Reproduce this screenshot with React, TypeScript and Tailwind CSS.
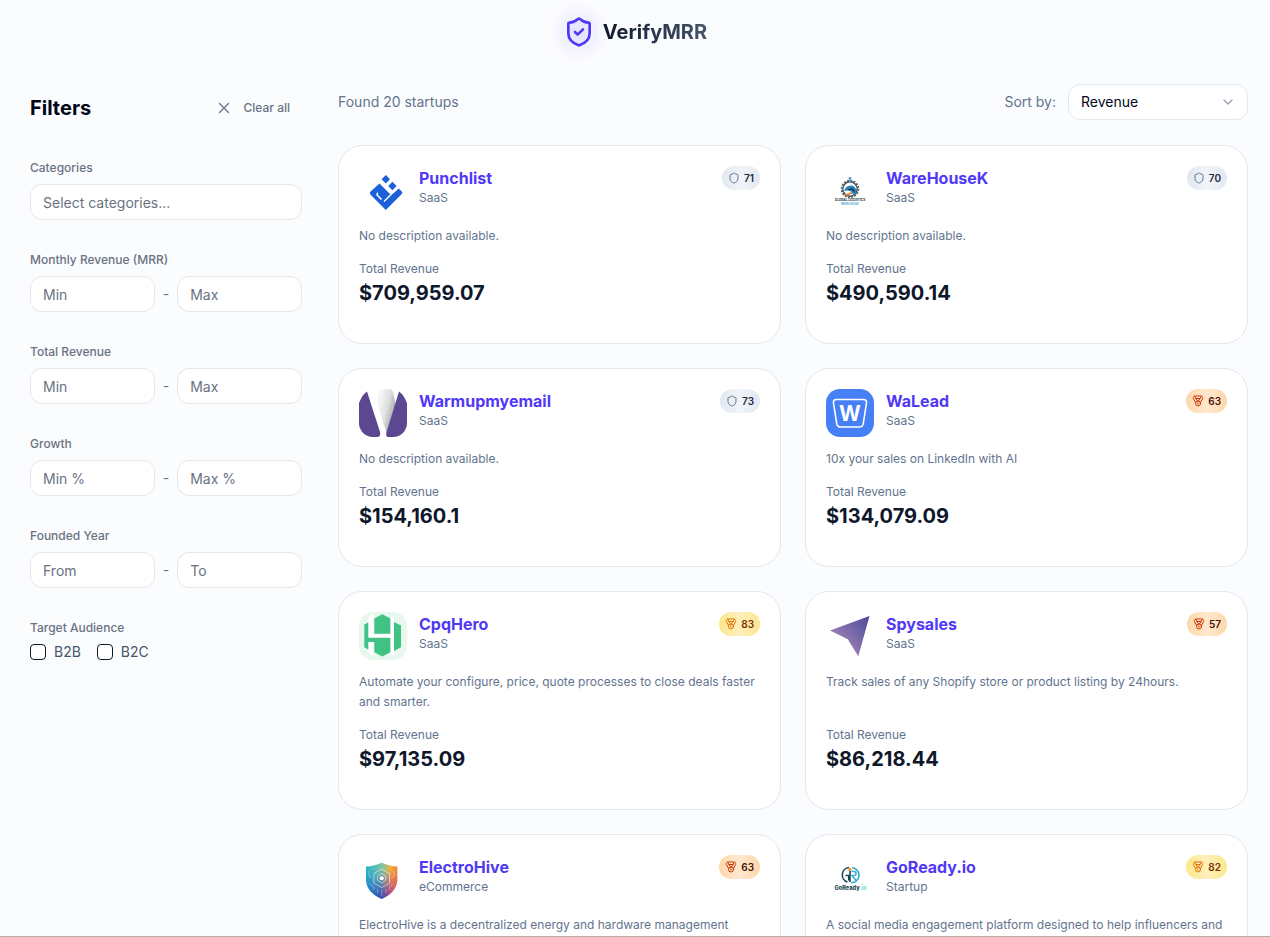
import React from "react";
import { ChevronDown, Medal, Shield, ShieldCheck, X } from "lucide-react";

type Tier = "silver" | "gold" | "bronze";

interface Startup {
  name: string;
  category: string;
  description: string;
  revenue: string;
  score: number;
  tier: Tier;
  logo: React.ReactNode;
}

function PunchlistLogo() {
  return (
    <svg viewBox="0 0 48 48" className="size-12" aria-hidden="true">
      <g fill="#1b5fd9">
        <path d="M26.8 9 31 13.2l-4.2 4.2-4.2-4.2z" />
        <path d="M33.4 15.8 37.6 20l-4.2 4.2-4.2-4.2z" />
        <path d="M20.500 17.500 31 28 35.500 26.500 39.600 22.400 42.800 25.600q1.200 1.200 0 2.400L26.800 44 11.600 28.800q-1.600-1.600 0-3.200z" />
      </g>
      <path d="m22.500 33.500-3.700-3.700q-1.500-1.500 0-3M34.500 26 25 35.500" fill="none" stroke="#fff" strokeWidth="1.500" />
    </svg>
  );
}

function WarehouseLogo() {
  return (
    <svg viewBox="0 0 48 48" className="size-12" aria-hidden="true">
      <circle cx="24" cy="23" r="8.4" fill="none" stroke="#5b6870" strokeWidth="1.8" strokeDasharray="2 1.3" />
      <circle cx="24" cy="23" r="7.2" fill="none" stroke="#44525c" strokeWidth="1.4" />
      <path d="M24 11v5M22.6 12.2h2.8" stroke="#4e9cc7" strokeWidth="1.6" />
      <path d="M18.5 25a6 6 0 0 1 11.6-1.5v4.2h-4.4q0-4.2-7.2-2.7z" fill="#2183b8" />
      <path d="M22.6 24q4-2.6 5.6 1.4" stroke="#12364d" strokeWidth="1.6" fill="none" />
      <path d="m17 29.4 8.2-3.4 1 1.6-4 1.8z" fill="#ee8038" />
      <text x="24" y="35.4" textAnchor="middle" fontSize="3.2" fontWeight="700" fill="#28343c" fontFamily="Inter, sans-serif">GLOBAL LOGISTICS</text>
      <text x="24" y="38.6" textAnchor="middle" fontSize="2.8" fontWeight="600" fill="#3597c8" fontFamily="Inter, sans-serif">WAREHOUSE</text>
    </svg>
  );
}

function WarmupLogo() {
  return (
    <svg viewBox="0 0 48 48" className="size-12 rounded-[14px]" aria-hidden="true">
      <defs>
        <linearGradient id="warmup-fold" x1="0.2" y1="0.2" x2="0.9" y2="0.6">
          <stop offset="0" stopColor="#f5f5f5" />
          <stop offset="0.5" stopColor="#dfdfe1" />
          <stop offset="1" stopColor="#a9abad" />
        </linearGradient>
      </defs>
      <path d="M20 3q1-3 4-3h6q3 0 4 3l2.5 11.5L27.5 44 18 13z" fill="url(#warmup-fold)" />
      <path d="M8 2.5Q3 6 0 14v34h19q3-1 2-5z" fill="#5b4890" />
      <path d="M40 2.5q5 3.5 8 11.5v34H28.5q-2-1-1-5z" fill="#5b4890" />
    </svg>
  );
}

function WaLeadLogo() {
  return (
    <svg viewBox="0 0 48 48" className="size-12 rounded-[14px]" aria-hidden="true">
      <path d="M0 0h48v48H0z" fill="#4680f6" />
      <path d="M10.5 10.5h27q3.5 0 3 3.5l-3.2 20.5q-.6 3.5-4 3.5H14.7q-3.4 0-4-3.5L7.5 14q-.5-3.5 3-3.5z" fill="none" stroke="#fff" strokeWidth="1.6" />
      <text x="24" y="31.5" textAnchor="middle" fontSize="21" fontWeight="700" fill="#fff" fontFamily="Inter, sans-serif">W</text>
    </svg>
  );
}

function CpqHeroLogo() {
  return (
    <svg viewBox="0 0 48 48" className="size-12 rounded-[14px]" aria-hidden="true">
      <path d="M0 0h48v48H0z" fill="#e8f8ee" />
      <path d="M9.3 4.5 14.5 2v20.5H31.5V4.5L35 6.3v37L31.5 42V27H9.3zM9.3 30h5.2v14l-5.2-3z" fill="#fff" />
      <g fill="#3fc283">
        <path d="m15.3 6.5 8-4.3 8 4.3v15.3h-16z" />
        <path d="M5.3 12.5 9.3 10.5v15.2h22v14.6l-8 4.3-8-4.3V30H9.3v7.5l-4-2.2z" />
        <path d="m35 10 7 3.5v21.8L35 39z" />
      </g>
    </svg>
  );
}

function SpysalesLogo() {
  return (
    <svg viewBox="0 0 48 48" className="size-12" aria-hidden="true">
      <defs>
        <linearGradient id="spysales-plane" x1="0" y1="1" x2="1" y2="0">
          <stop offset="0.15" stopColor="#a98bb8" />
          <stop offset="1" stopColor="#4c4a9c" />
        </linearGradient>
      </defs>
      <path d="M43.5 4 32.3 44.3 21.8 27.3 4 18.5z" fill="url(#spysales-plane)" />
    </svg>
  );
}

function ElectroHiveLogo() {
  return (
    <svg viewBox="0 0 48 48" className="size-12" aria-hidden="true">
      <defs>
        <linearGradient id="hive-top" x1="0" y1="0" x2="1" y2="0">
          <stop offset="0" stopColor="#25b5c9" />
          <stop offset="0.5" stopColor="#7cc5a4" />
          <stop offset="0.8" stopColor="#f2b03c" />
          <stop offset="1" stopColor="#f0803c" />
        </linearGradient>
        <linearGradient id="hive-base" x1="0" y1="0" x2="1" y2="0">
          <stop offset="0" stopColor="#2377cf" />
          <stop offset="0.45" stopColor="#3553b8" />
          <stop offset="0.75" stopColor="#a23f92" />
          <stop offset="1" stopColor="#e0506a" />
        </linearGradient>
        <linearGradient id="hive-fade" x1="0" y1="0" x2="0" y2="1">
          <stop offset="0.3" stopColor="#000" />
          <stop offset="0.85" stopColor="#fff" />
        </linearGradient>
        <mask id="hive-mask">
          <path d="M0 0h48v48H0z" fill="url(#hive-fade)" />
        </mask>
      </defs>
      <path d="M22.7 7.5q7 3.7 15.6 4v14q-1 12-15.6 18.500Q8 37.5 7 25.500v-14q8.6-.3 15.7-4z" fill="url(#hive-top)" />
      <path d="M22.7 7.5q7 3.7 15.6 4v14q-1 12-15.6 18.500Q8 37.5 7 25.500v-14q8.6-.3 15.7-4z" fill="url(#hive-base)" mask="url(#hive-mask)" />
      <g fill="none" stroke="#fff" strokeOpacity="0.65" strokeWidth="0.8">
        <path d="m22.7 14 7.8 4.5v9.6l-7.8 4.5-7.8-4.5v-9.6z" />
        <path d="m22.7 18.5 4 2.3v4.9l-4 2.3-4-2.3v-4.9z" />
        <path d="M10 16v5l3 2M35.4 16v5l-3 2M11 29l4 3v3M34.4 29l-4 3v3M22.7 35v6M18.5 34v4M27 34v4" strokeOpacity="0.4" />
      </g>
      <circle cx="22.7" cy="23.3" r="2" fill="#fff" />
    </svg>
  );
}

function GoReadyLogo() {
  return (
    <svg viewBox="0 0 48 48" className="size-12" aria-hidden="true">
      <path d="M23 12.5a7.5 7.5 0 0 0-1.5 14.6" fill="none" stroke="#174a55" strokeWidth="1.6" />
      <path d="M26 12.8a7.5 7.5 0 0 1-1 15" fill="none" stroke="#35afd4" strokeWidth="1.6" />
      <path d="M19.5 20.5h3.3v5M24 27V15.5" fill="none" stroke="#174a55" strokeWidth="1.6" />
      <path d="M25.5 16.5h2.5q2 0 2 2t-2 2h-2l4 5" fill="none" stroke="#35afd4" strokeWidth="1.5" />
      <path d="m24 12 2.5 3.5h-5z" fill="#f0963c" />
      <text x="8.5" y="34.6" fontSize="5.6" fontWeight="800" fill="#1b4650" fontFamily="Inter, sans-serif">
        GoReady<tspan fill="#7fd3e6">.io</tspan>
      </text>
    </svg>
  );
}

const startups: Startup[] = [
  { name: "Punchlist", category: "SaaS", description: "No description available.", revenue: "$709,959.07", score: 71, tier: "silver", logo: <PunchlistLogo /> },
  { name: "WareHouseK", category: "SaaS", description: "No description available.", revenue: "$490,590.14", score: 70, tier: "silver", logo: <WarehouseLogo /> },
  { name: "Warmupmyemail", category: "SaaS", description: "No description available.", revenue: "$154,160.1", score: 73, tier: "silver", logo: <WarmupLogo /> },
  { name: "WaLead", category: "SaaS", description: "10x your sales on LinkedIn with AI", revenue: "$134,079.09", score: 63, tier: "bronze", logo: <WaLeadLogo /> },
  { name: "CpqHero", category: "SaaS", description: "Automate your configure, price, quote processes to close deals faster and smarter.", revenue: "$97,135.09", score: 83, tier: "gold", logo: <CpqHeroLogo /> },
  { name: "Spysales", category: "SaaS", description: "Track sales of any Shopify store or product listing by 24hours.", revenue: "$86,218.44", score: 57, tier: "bronze", logo: <SpysalesLogo /> },
  { name: "ElectroHive", category: "eCommerce", description: "ElectroHive is a decentralized energy and hardware management", revenue: "", score: 63, tier: "bronze", logo: <ElectroHiveLogo /> },
  { name: "GoReady.io", category: "Startup", description: "A social media engagement platform designed to help influencers and", revenue: "", score: 82, tier: "gold", logo: <GoReadyLogo /> },
];

const badgeStyles: Record<Tier, string> = {
  silver: "from-slate-200 via-slate-100 to-slate-200 text-slate-800",
  gold: "from-[#fde68a] via-[#fef0bd] to-[#fde68a] text-amber-900",
  bronze: "from-[#fed7aa] via-[#ffe8cf] to-[#fed7aa] text-orange-950",
};

const iconStyles: Record<Tier, string> = {
  silver: "text-slate-500",
  gold: "text-amber-600",
  bronze: "text-orange-700",
};

function ScoreBadge({ score, tier }: { score: number; tier: Tier }) {
  const Icon = tier === "silver" ? Shield : Medal;
  return (
    <span className={`flex h-6 shrink-0 items-center gap-1 rounded-full bg-linear-to-r px-1.5 text-[10px] font-semibold ${badgeStyles[tier]}`}>
      <Icon className={`size-3 ${iconStyles[tier]}`} />
      {score}
    </span>
  );
}

function StartupCard({ startup }: { startup: Startup }) {
  return (
    <article className="flex flex-col rounded-3xl border border-slate-200 bg-white px-5 pt-5 pb-9">
      <div className="flex items-start gap-3">
        <div className="size-12 shrink-0">{startup.logo}</div>
        <div className="min-w-0 flex-1">
          <h2 className="text-base leading-6 font-bold">
            <a href="#" className="text-[#4f39f6]">{startup.name}</a>
          </h2>
          <p className="text-xs leading-4 text-slate-500">{startup.category}</p>
        </div>
        <ScoreBadge score={startup.score} tier={startup.tier} />
      </div>
      <p className="mt-3 mb-[15px] text-xs leading-5 text-slate-500">{startup.description}</p>
      <div className="mt-auto flex flex-col gap-0.5">
        <p className="text-xs leading-4 text-slate-500">Total Revenue</p>
        <p className="min-h-7 text-xl leading-7 font-bold text-slate-900">{startup.revenue}</p>
      </div>
    </article>
  );
}

const inputClass =
  "h-9 w-full min-w-0 rounded-xl border border-gray-200 bg-white px-3 text-sm text-slate-900 placeholder:text-gray-500";

function RangeFilter({ label, from, to }: { label: string; from: string; to: string }) {
  return (
    <fieldset>
      <legend className="mb-2 text-xs leading-4 font-medium text-gray-500">{label}</legend>
      <div className="flex items-center gap-2">
        <input type="text" className={inputClass} placeholder={from} aria-label={`${label} ${from}`} />
        <span className="text-sm text-gray-500">-</span>
        <input type="text" className={inputClass} placeholder={to} aria-label={`${label} ${to}`} />
      </div>
    </fieldset>
  );
}

function AudienceOption({ label }: { label: string }) {
  return (
    <label className="flex items-center gap-2 text-sm leading-4 text-slate-600">
      <input type="checkbox" className="size-4 appearance-none rounded border border-slate-900 bg-white checked:bg-slate-900" />
      {label}
    </label>
  );
}

function Filters() {
  return (
    <aside className="w-72 shrink-0 px-2 pt-2">
      <div className="mb-9 flex h-8 items-center justify-between">
        <h2 className="text-xl font-bold text-slate-950">Filters</h2>
        <button type="button" className="flex h-8 items-center gap-2.5 px-3 text-xs font-medium text-gray-500">
          <X className="size-[18px]" strokeWidth={1.75} />
          Clear all
        </button>
      </div>
      <div className="flex flex-col gap-8">
        <div>
          <label htmlFor="categories" className="mb-2 block text-xs leading-4 font-medium text-gray-500">Categories</label>
          <input id="categories" type="text" className={inputClass} placeholder="Select categories..." />
        </div>
        <RangeFilter label="Monthly Revenue (MRR)" from="Min" to="Max" />
        <RangeFilter label="Total Revenue" from="Min" to="Max" />
        <RangeFilter label="Growth" from="Min %" to="Max %" />
        <RangeFilter label="Founded Year" from="From" to="To" />
        <fieldset>
          <legend className="mb-2 text-xs leading-4 font-medium text-gray-500">Target Audience</legend>
          <div className="flex gap-4">
            <AudienceOption label="B2B" />
            <AudienceOption label="B2C" />
          </div>
        </fieldset>
      </div>
    </aside>
  );
}

export default function App() {
  return (
    <div className="h-screen overflow-y-auto border-b border-[#b8aca6] bg-[#fbfcfe] font-['Inter',sans-serif] [scrollbar-width:none]">
      <header className="flex h-16 items-center justify-center gap-2">
        <span className="block rounded-full bg-[#f3f3ff] shadow-[0_0_14px_4px_rgba(99,91,255,0.1)]">
          <ShieldCheck className="size-8 fill-[#e6e6ff] text-[#4f39f6]" />
        </span>
        <h1 className="bg-linear-to-r from-slate-900 to-slate-600 bg-clip-text text-xl leading-7 font-bold text-transparent">VerifyMRR</h1>
      </header>
      <div className="flex items-start gap-7 px-[22px] pt-5 pb-8">
        <Filters />
        <main className="min-w-0 flex-1">
          <div className="mb-[25px] flex items-center justify-between">
            <p className="text-sm text-slate-500">Found 20 startups</p>
            <div className="flex items-center gap-3">
              <label htmlFor="sort" className="text-sm text-slate-500">Sort by:</label>
              <div className="relative w-[180px]">
                <select id="sort" defaultValue="Revenue" className="h-9 w-full appearance-none rounded-xl border border-slate-200 bg-white pr-9 pl-3 text-sm text-slate-950">
                  <option>Revenue</option>
                  <option>Growth</option>
                </select>
                <ChevronDown className="pointer-events-none absolute top-2.5 right-3 size-4 text-gray-400" strokeWidth={2} />
              </div>
            </div>
          </div>
          <div className="grid grid-cols-2 gap-6">
            {startups.map((startup) => (
              <StartupCard key={startup.name} startup={startup} />
            ))}
          </div>
        </main>
      </div>
    </div>
  );
}
